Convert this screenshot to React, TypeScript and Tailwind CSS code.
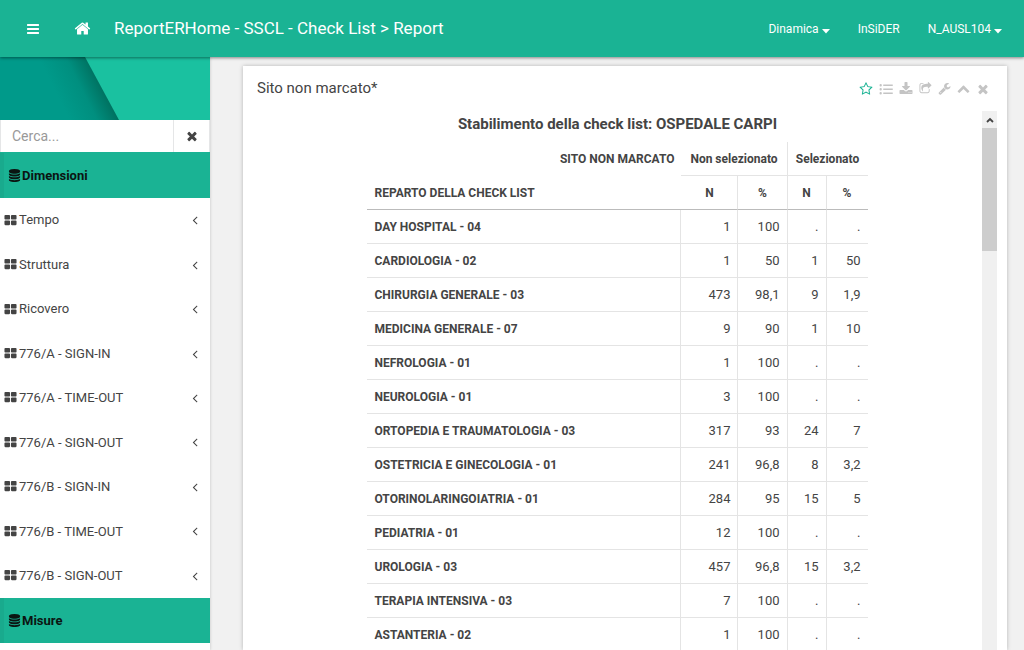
import React from "react";

const paths = {
  bars: "M1664 1344v128q0 26-19 45t-45 19h-1408q-26 0-45-19t-19-45v-128q0-26 19-45t45-19h1408q26 0 45 19t19 45zm0-512v128q0 26-19 45t-45 19h-1408q-26 0-45-19t-19-45v-128q0-26 19-45t45-19h1408q26 0 45 19t19 45zm0-512v128q0 26-19 45t-45 19h-1408q-26 0-45-19t-19-45v-128q0-26 19-45t45-19h1408q26 0 45 19t19 45z",
  home: "M1472 992v480q0 26-19 45t-45 19h-384v-384h-256v384h-384q-26 0-45-19t-19-45v-480q0-1 .5-3t.5-3l575-474 575 474q1 2 1 6zm223-69l-62 74q-8 9-21 11h-3q-13 0-21-7l-692-577-692 577q-12 8-24 7-13-2-21-11l-62-74q-8-10-7-23.5t11-21.5l719-599q32-26 76-26t76 26l244 204v-195q0-14 9-23t23-9h192q14 0 23 9t9 23v408l219 182q10 8 11 21.5t-7 23.5z",
  database: "M896 768q237 0 443-43t325-127v170q0 69-103 128t-280 93.5-385 34.5-385-34.5-280-93.5-103-128v-170q119 84 325 127t443 43zm0 768q237 0 443-43t325-127v170q0 69-103 128t-280 93.5-385 34.5-385-34.5-280-93.5-103-128v-170q119 84 325 127t443 43zm0-384q237 0 443-43t325-127v170q0 69-103 128t-280 93.5-385 34.5-385-34.5-280-93.5-103-128v-170q119 84 325 127t443 43zm0-1152q208 0 385 34.5t280 93.5 103 128v128q0 69-103 128t-280 93.5-385 34.5-385-34.5-280-93.5-103-128v-128q0-69 103-128t280-93.5 385-34.5z",
  thLarge: "M832 1024v384q0 52-38 90t-90 38h-512q-52 0-90-38t-38-90v-384q0-52 38-90t90-38h512q52 0 90 38t38 90zm0-768v384q0 52-38 90t-90 38h-512q-52 0-90-38t-38-90v-384q0-52 38-90t90-38h512q52 0 90 38t38 90zm896 768v384q0 52-38 90t-90 38h-512q-52 0-90-38t-38-90v-384q0-52 38-90t90-38h512q52 0 90 38t38 90zm0-768v384q0 52-38 90t-90 38h-512q-52 0-90-38t-38-90v-384q0-52 38-90t90-38h512q52 0 90 38t38 90z",
  angleLeft: "M1203 544q0 13-10 23l-393 393 393 393q10 10 10 23t-10 23l-50 50q-10 10-23 10t-23-10l-466-466q-10-10-10-23t10-23l466-466q10-10 23-10t23 10l50 50q10 10 10 23z",
  times: "M1490 1322q0 40-28 68l-136 136q-28 28-68 28t-68-28l-294-294-294 294q-28 28-68 28t-68-28l-136-136q-28-28-28-68t28-68l294-294-294-294q-28-28-28-68t28-68l136-136q28-28 68-28t68 28l294 294 294-294q28-28 68-28t68 28l136 136q28 28 28 68t-28 68l-294 294 294 294q28 28 28 68z",
  star: "M1201 1004l306-297-422-62-189-382-189 382-422 62 306 297-73 421 378-199 377 199zm527-357q0 22-26 48l-363 354 86 500q1 7 1 20 0 50-41 50-19 0-40-12l-449-236-449 236q-22 12-40 12-21 0-31.5-14.5t-10.5-35.5q0-6 2-20l86-500-364-354q-25-27-25-48 0-37 56-46l502-73 225-455q19-41 49-41t49 41l225 455 502 73q56 9 56 46z",
  list: "M64 416a150 150 0 1 0 300 0a150 150 0 1 0-300 0zM544 320h1216v192h-1216zM64 928a150 150 0 1 0 300 0a150 150 0 1 0-300 0zM544 832h1216v192h-1216zM64 1440a150 150 0 1 0 300 0a150 150 0 1 0-300 0zM544 1344h1216v192h-1216z",
  download: "M1344 1344q0-26-19-45t-45-19-45 19-19 45 19 45 45 19 45-19 19-45zm256 0q0-26-19-45t-45-19-45 19-19 45 19 45 45 19 45-19 19-45zm128-224v320q0 40-28 68t-68 28h-1472q-40 0-68-28t-28-68v-320q0-40 28-68t68-28h465l135 136q58 56 136 56t136-56l136-136h464q40 0 68 28t28 68zm-325-569q17 41-14 70l-448 448q-18 19-45 19t-45-19l-448-448q-31-29-14-70 17-39 59-39h256v-448q0-26 19-45t45-19h256q26 0 45 19t19 45v448h256q42 0 59 39z",
  share: "M1472 989v259q0 119-84.5 203.5t-203.5 84.5h-832q-119 0-203.5-84.5t-84.5-203.5v-832q0-119 84.5-203.5t203.5-84.5h255q13 0 22.5 9.5t9.5 22.5q0 27-26 32-77 26-133 60-10 4-16 4h-112q-66 0-113 47t-47 113v832q0 66 47 113t113 47h832q66 0 113-47t47-113v-214q0-19 18-29 28-13 54-37 16-16 35-8 21 9 21 29zm237-496l-384 384q-18 19-45 19-12 0-25-5-39-17-39-59v-192h-160q-323 0-438 131-119 137-74 473 3 23-20 34-8 2-12 2-16 0-26-13-10-14-21-31t-39.5-68.5-49.5-99.5-38.5-114-17.5-122q0-49 3.5-91t14-90 28-88 47-81.5 68.5-74 94.5-61.5 124.5-48.5 159.5-30.5 196.5-11h160v-192q0-42 39-59 13-5 25-5 26 0 45 19l384 384q19 19 19 45t-19 45z",
  wrench: "M448 1472q0-26-19-45t-45-19-45 19-19 45 19 45 45 19 45-19 19-45zm644-420l-682 682q-37 37-90 37-52 0-91-37l-106-108q-38-36-38-90 0-53 38-91l681-681q39 98 114.5 173.5t173.5 114.5zm634-435q0 39-23 106-47 134-164.5 217.5t-258.5 83.5q-185 0-316.5-131.5t-131.5-316.5 131.5-316.5 316.5-131.5q58 0 121.5 16.5t107.5 46.5q16 11 16 28t-16 28l-293 169v224l193 107q5-3 79-48.5t135.5-81 70.5-35.5q15 0 23.5 10t8.5 25z",
  chevronUp: "M1683 1331l-166 165q-19 19-45 19t-45-19l-531-531-531 531q-19 19-45 19t-45-19l-166-165q-19-19-19-45.5t19-45.5l742-741q19-19 45-19t45 19l742 741q19 19 19 45.5t-19 45.5z",
};

function Icon({ name, className }: { name: keyof typeof paths; className: string }) {
  return (
    <svg viewBox="0 0 1792 1792" fill="currentColor" aria-hidden="true" className={`shrink-0 ${className}`}>
      <path d={paths[name]} />
    </svg>
  );
}

function Caret() {
  return (
    <svg viewBox="0 0 8 5" fill="currentColor" aria-hidden="true" className="mt-[5px] h-[5px] w-2">
      <path d="M0 0h8L4 4.6z" />
    </svg>
  );
}

const menu = [
  "Tempo",
  "Struttura",
  "Ricovero",
  "776/A - SIGN-IN",
  "776/A - TIME-OUT",
  "776/A - SIGN-OUT",
  "776/B - SIGN-IN",
  "776/B - TIME-OUT",
  "776/B - SIGN-OUT",
];

const rows: [string, string, string, string, string][] = [
  ["DAY HOSPITAL - 04", "1", "100", ".", "."],
  ["CARDIOLOGIA - 02", "1", "50", "1", "50"],
  ["CHIRURGIA GENERALE - 03", "473", "98,1", "9", "1,9"],
  ["MEDICINA GENERALE - 07", "9", "90", "1", "10"],
  ["NEFROLOGIA - 01", "1", "100", ".", "."],
  ["NEUROLOGIA - 01", "3", "100", ".", "."],
  ["ORTOPEDIA E TRAUMATOLOGIA - 03", "317", "93", "24", "7"],
  ["OSTETRICIA E GINECOLOGIA - 01", "241", "96,8", "8", "3,2"],
  ["OTORINOLARINGOIATRIA - 01", "284", "95", "15", "5"],
  ["PEDIATRIA - 01", "12", "100", ".", "."],
  ["UROLOGIA - 03", "457", "96,8", "15", "3,2"],
  ["TERAPIA INTENSIVA - 03", "7", "100", ".", "."],
  ["ASTANTERIA - 02", "1", "100", ".", "."],
];

const tools: { name: keyof typeof paths; label: string; size: string }[] = [
  { name: "star", label: "Preferiti", size: "size-[14px]" },
  { name: "list", label: "Elenco", size: "size-[14px]" },
  { name: "download", label: "Scarica", size: "size-[14px]" },
  { name: "share", label: "Condividi", size: "size-[13px]" },
  { name: "wrench", label: "Impostazioni", size: "size-[13px]" },
  { name: "chevronUp", label: "Comprimi", size: "size-[13px]" },
  { name: "times", label: "Chiudi", size: "size-[14px]" },
];

function SectionTitle({ label }: { label: string }) {
  return (
    <h2 className="flex h-[45px] shrink-0 items-center gap-px border-l-4 border-[#19aa8d] bg-[#1ab394] pl-1 text-[13px] font-bold text-[#0b1512]">
      <Icon name="database" className="size-[13px]" />
      {label}
    </h2>
  );
}

function Sidebar() {
  return (
    <aside className="flex w-[210px] shrink-0 flex-col overflow-hidden bg-white shadow-[0_0_3px_rgba(0,0,0,0.2)]">
      <svg viewBox="0 0 210 63" preserveAspectRatio="none" aria-hidden="true" className="h-[63px] w-full shrink-0">
        <defs>
          <linearGradient id="fold" gradientUnits="userSpaceOnUse" x1="62" y1="48" x2="102" y2="28">
            <stop offset="0" stopColor="#009a8a" />
            <stop offset="0.55" stopColor="#008f7f" />
            <stop offset="1" stopColor="#00705f" />
          </linearGradient>
        </defs>
        <rect width="210" height="63" fill="#1ac1a0" />
        <path d="M0 0H85L119 63H0z" fill="url(#fold)" />
      </svg>
      <form className="flex h-8 shrink-0 border-x border-[#e5e6e7]">
        <input
          type="text"
          aria-label="Cerca"
          placeholder="Cerca..."
          className="min-w-0 flex-1 bg-white px-[11px] text-sm text-[#444] outline-none placeholder:text-[#999]"
        />
        <button type="button" aria-label="Cancella ricerca" className="flex w-9 items-center justify-center border-l border-[#e5e6e7] text-[#444]">
          <Icon name="times" className="size-[14px]" />
        </button>
      </form>
      <div className="h-px shrink-0 bg-[#1ab394]" />
      <SectionTitle label="Dimensioni" />
      <ul className="grid h-[400px] shrink-0 auto-rows-fr">
        {menu.map((item) => (
          <li key={item} className="flex">
            <a href="#" className="flex flex-1 items-center gap-[2px] pl-1 pr-2 text-[13px] text-[#444]">
              <Icon name="thLarge" className="size-[13px]" />
              <span className="flex-1">{item}</span>
              <Icon name="angleLeft" className="size-[14px]" />
            </a>
          </li>
        ))}
      </ul>
      <SectionTitle label="Misure" />
    </aside>
  );
}

function Report() {
  return (
    <table className="mx-auto w-[500px] table-fixed border-separate border-spacing-0 text-[13px] leading-[18px] text-[#444] [&_th]:text-xs">
      <colgroup>
        <col className="w-[314px]" />
        <col className="w-[57px]" />
        <col className="w-[49px]" />
        <col className="w-[39px]" />
        <col className="w-[41px]" />
      </colgroup>
      <thead>
        <tr className="h-[34px]">
          <th className="px-[7px] text-right">SITO NON MARCATO</th>
          <th colSpan={2} className="whitespace-nowrap border-b border-r border-[#e4e4e4] px-1 text-center">
            Non selezionato
          </th>
          <th colSpan={2} className="whitespace-nowrap border-b border-[#e4e4e4] px-1 text-center">
            Selezionato
          </th>
        </tr>
        <tr className="h-[34px]">
          <th className="border-b border-[#bbb] px-[7px] text-left">REPARTO DELLA CHECK LIST</th>
          <th className="border-b border-r border-b-[#bbb] border-r-[#e4e4e4]">N</th>
          <th className="border-b border-r border-b-[#bbb] border-r-[#e4e4e4]">%</th>
          <th className="border-b border-r border-b-[#bbb] border-r-[#e4e4e4]">N</th>
          <th className="border-b border-[#bbb]">%</th>
        </tr>
      </thead>
      <tbody>
        {rows.map((r) => (
          <tr key={r[0]} className="h-[34px]">
            <th scope="row" className="border-b border-r border-[#e4e4e4] px-[7px] text-left">
              {r[0]}
            </th>
            <td className="border-b border-r border-[#e4e4e4] px-[7px] text-right">{r[1]}</td>
            <td className="border-b border-r border-[#e4e4e4] px-[7px] text-right">{r[2]}</td>
            <td className="border-b border-r border-[#e4e4e4] px-[7px] text-right">{r[3]}</td>
            <td className="border-b border-[#e4e4e4] px-[7px] text-right">{r[4]}</td>
          </tr>
        ))}
      </tbody>
    </table>
  );
}

export default function App() {
  return (
    <div className="flex h-screen flex-col overflow-hidden bg-[#f1f1f1] font-[Roboto,sans-serif] text-[#444]">
      <header className="z-10 flex h-[57px] shrink-0 items-center bg-[#1ab394] pl-[26px] pr-[22px] text-white shadow-[0_1px_3px_rgba(0,0,0,0.45)]">
        <button type="button" aria-label="Menu">
          <Icon name="bars" className="size-[14px]" />
        </button>
        <a href="#" aria-label="Home" className="ml-[34px]">
          <Icon name="home" className="size-[17px]" />
        </a>
        <h1 className="ml-[23px] flex-1 text-[17px]">ReportERHome - SSCL - Check List &gt; Report</h1>
        <nav className="flex items-center gap-7 text-xs">
          <button type="button" className="flex items-center gap-[3px]">
            Dinamica
            <Caret />
          </button>
          <a href="#">InSiDER</a>
          <button type="button" className="flex items-center gap-[3px]">
            N_AUSL104
            <Caret />
          </button>
        </nav>
      </header>
      <div className="flex min-h-0 flex-1">
        <Sidebar />
        <main className="flex min-w-0 flex-1 flex-col pl-[33px] pr-[17px] pt-[9px]">
          <section className="flex min-h-0 flex-1 flex-col bg-white shadow-[0_0_4px_rgba(0,0,0,0.25)]">
            <div className="flex h-[45px] shrink-0 items-center justify-between pl-[14px] pr-[17px]">
              <h2 className="text-[15px]">Sito non marcato*</h2>
              <div className="flex items-center gap-[6px] text-[#c4c4c4]">
                {tools.map((t) => (
                  <button key={t.name} type="button" aria-label={t.label} className="first:text-[#1ab394]">
                    <Icon name={t.name} className={t.size} />
                  </button>
                ))}
              </div>
            </div>
            <div className="flex min-h-0 flex-1 px-[10px]">
              <div className="min-w-0 flex-1 overflow-hidden">
                <h3 className="mb-1 flex h-[27px] items-center justify-center text-[15px] font-bold">
                  Stabilimento della check list: OSPEDALE CARPI
                </h3>
                <Report />
              </div>
              <div className="w-[15px] shrink-0 bg-[#f0f0f0]">
                <div className="flex h-[17px] items-center justify-center">
                  <svg viewBox="0 0 8 6" fill="none" stroke="#444" strokeWidth="1.8" aria-hidden="true" className="h-[6px] w-2">
                    <path d="M1 5l3-3 3 3" />
                  </svg>
                </div>
                <div className="h-[123px] bg-[#cdcdcd]" />
              </div>
            </div>
          </section>
        </main>
      </div>
    </div>
  );
}
